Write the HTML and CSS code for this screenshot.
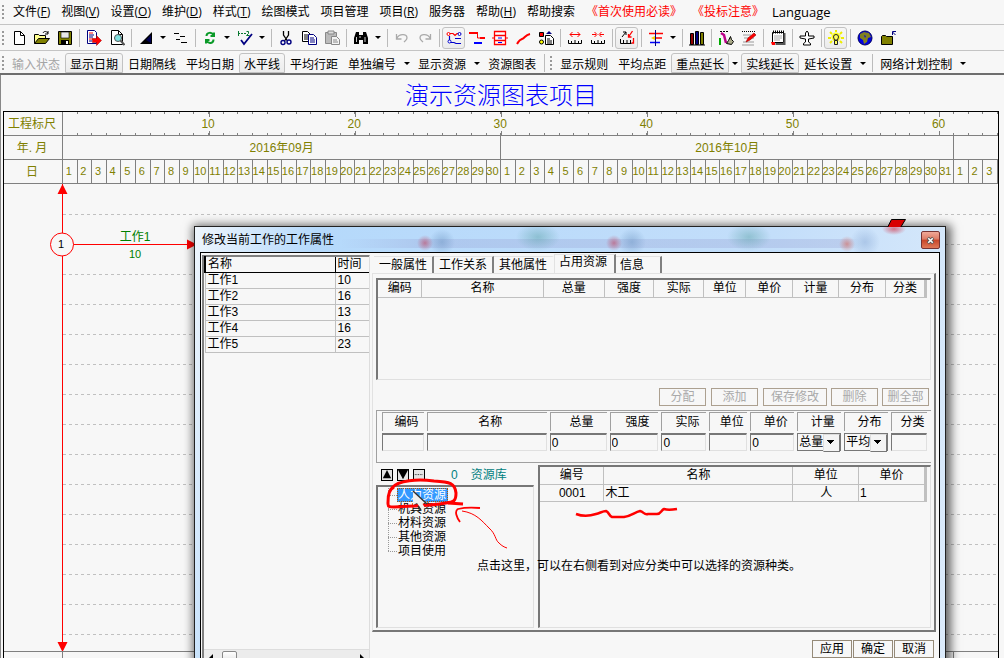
FILE: index.html
```html
<!DOCTYPE html>
<html lang="zh-CN">
<head>
<meta charset="utf-8">
<title>演示资源图表项目</title>
<link rel="stylesheet" href="styles.css">
</head>
<body>
<nav class="menubar">
  <i class="grip"></i>
  <button>文件(<u>F</u>)</button><button>视图(<u>V</u>)</button><button>设置(<u>O</u>)</button><button>维护(<u>D</u>)</button><button>样式(<u>T</u>)</button><button>绘图模式</button><button>项目管理</button><button>项目(<u>R</u>)</button><button>服务器</button><button>帮助(<u>H</u>)</button><button>帮助搜索</button><button class="notice">《首次使用必读》</button><button class="notice">《投标注意》</button><button class="lang">Language</button>
</nav>

<div class="toolbar icons">
  <i class="grip"></i>
  <button class="tool" aria-label="新建"><svg viewBox="0 0 16 16"><path d="M3.5 1.500h6l4 4v9h-10z" fill="#fff" stroke="#000"/><path d="M9.500 1.500v4h4" fill="none" stroke="#000"/></svg></button>
  <button class="tool" aria-label="打开"><svg viewBox="0 0 16 16"><path d="M.5 13.500v-9h4l1 1h6v3" fill="#ffff90" stroke="#000"/><path d="M.5 13.500l4-5h11l-4 5z" fill="#808000" stroke="#000"/><path d="M9 3c1-2 3-2 5 0m0-2v3h-3" fill="none" stroke="#000"/></svg></button>
  <button class="tool" aria-label="保存"><svg viewBox="0 0 16 16"><path d="M1.500 1.500h13v13h-13z" fill="#808000" stroke="#000"/><path d="M4 2h8v6H4z" fill="#e8e8e8" stroke="#000" stroke-width=".6"/><path d="M4 10h8v5H4z"/><path d="M9 11h2v3H9z" fill="#fff"/></svg></button>
  <i class="sep"></i>
  <button class="tool" aria-label="导出"><svg viewBox="0 0 16 16"><path d="M1.500.5h7l2 2v11h-9z" fill="#fff" stroke="#000080"/><path d="M3 3h4M3 9h4" stroke="red"/><path d="M3 5h5M3 7h4M3 11h3" stroke="#000080"/><path d="M6.500 8.500h4v-3l5 5-5 5v-3h-4z" fill="red" stroke="#900" stroke-width=".5"/></svg></button>
  <button class="tool" aria-label="打印预览"><svg viewBox="0 0 16 16"><path d="M2.500 14.500V.5h7l4 4v10z" fill="#fff" stroke="#000"/><path d="M9.500.5v4h4" fill="none" stroke="#000"/><circle cx="9" cy="8" r="3.500" fill="#80e0e0" stroke="#555"/><path d="M11.500 10.500l4 4.500" stroke="#555" stroke-width="2"/></svg></button>
  <i class="sep"></i>
  <button class="tool" aria-label="比例"><svg viewBox="0 0 16 16"><path d="M2 14L14 2v12z"/><path d="M8 10l5-5v8z" fill="#000050"/></svg></button><button class="drop" aria-label="比例选项"></button>
  <button class="tool" aria-label="分级"><svg viewBox="0 0 16 16"><path d="M1 3.500h5M7 6.500h5M3 9.500h4M8 12.500h6" fill="none" stroke="#000"/></svg></button>
  <i class="sep"></i>
  <button class="tool" aria-label="刷新"><svg viewBox="0 0 16 16"><path d="M4.500 6c0-3.500 5-4.500 7-1m.5-2.500V6H8.500M11.500 9.500c0 4-5 5-7 1m-.5 3V10h3.500" fill="none" stroke="#0a9a28" stroke-width="2"/></svg></button><button class="drop" aria-label="刷新选项"></button>
  <button class="tool" aria-label="检查"><svg viewBox="0 0 16 16"><path d="M1.500 1v5M1 3.500h8" stroke="#087830" stroke-dasharray="2 1"/><path d="M9.500 1.500h2v2l-2 2h3" fill="none" stroke="#087830"/><path d="M4 10l3 4 8-10" fill="none" stroke="#000080" stroke-width="1.800"/></svg></button><button class="drop" aria-label="检查选项"></button>
  <i class="sep"></i>
  <button class="tool" aria-label="剪切"><svg viewBox="0 0 16 16"><path d="M5.500 1v4l4 6M10.500 1v4l-4 6" fill="none" stroke="#000" stroke-width="1.300"/><circle cx="5" cy="12.500" r="2" fill="none" stroke="#000080" stroke-width="1.400"/><circle cx="11" cy="12" r="2" fill="none" stroke="#000080" stroke-width="1.400"/></svg></button>
  <button class="tool" aria-label="复制"><svg viewBox="0 0 16 16"><path d="M1.500 1.500h5l3 3v7h-8z" fill="#fff" stroke="#000"/><path d="M3 5h4M3 7h4M3 9h4" stroke="#000"/><path d="M7.500 4.500h5l3 3v7h-8z" fill="#fff" stroke="#000080"/><path d="M9 8h4M9 10h5M9 12h5" stroke="#000080"/></svg></button>
  <button class="tool" aria-label="粘贴" disabled><svg viewBox="0 0 16 16"><path d="M1.500 2.500h11v11h-11z" fill="#bbb" stroke="#888"/><path d="M4 1h6v3H4z" fill="#ddd" stroke="#888"/><path d="M7.500 6.500h5l3 3v5h-8z" fill="#f3f3f3" stroke="#888"/><path d="M9 10h4M9 12h5" stroke="#888"/></svg></button>
  <i class="sep"></i>
  <button class="tool" aria-label="查找"><svg viewBox="0 0 16 16"><path d="M3 2h3v3h4V2h3l2 6v6h-5v-4H6v4H1V8z"/><path d="M3.500 7v5M12 7v5M7 6v2" stroke="#fff" stroke-width=".8"/></svg></button><button class="drop" aria-label="查找选项"></button>
  <i class="sep"></i>
  <button class="tool" aria-label="撤销" disabled><svg viewBox="0 0 16 16"><path d="M2.500 4v5h5M3 8c2-4 10-5 10 0 0 2-2 3-3 4" fill="none" stroke="#aaa" stroke-width="1.300"/></svg></button>
  <button class="tool" aria-label="重做" disabled><svg viewBox="0 0 16 16"><path d="M13.500 4v5h-5M13 8c-2-4-10-5-10 0 0 2 2 3 3 4" fill="none" stroke="#aaa" stroke-width="1.300"/></svg></button>
  <i class="sep"></i>
  <button class="tool on" aria-label="网络图"><svg viewBox="0 0 16 16"><path d="M3 3.500h4l2 2 2-2h4" fill="none" stroke="red" stroke-width="1.200"/><circle cx="2.500" cy="4" r="1.500" fill="#fff" stroke="red"/><path d="M3.500 6v6M4 12.500h4l2 1h5M9 8.500h6" fill="none" stroke="#00c" stroke-width="1.200"/><circle cx="3.500" cy="11.500" r="1.500" fill="#fff" stroke="#00c"/><circle cx="13.500" cy="4" r="1.500" fill="#fff" stroke="#00c"/></svg></button>
  <button class="tool" aria-label="横道图"><svg viewBox="0 0 16 16"><path d="M0 3h9M11 8h5" stroke="red" stroke-width="2"/><path d="M8.500 3v5H12" fill="none" stroke="red"/><path d="M5 13h8" stroke="#00f" stroke-width="2"/></svg></button>
  <button class="tool" aria-label="单代号"><svg viewBox="0 0 16 16"><path d="M2.500 1.500h11v13h-11zM2 5.500h12M2 10.500h12" fill="#fff" stroke="red" stroke-width="1.300"/><path d="M0 8h3M13 8h3" stroke="red"/><path d="M6 8h4M6 12.500h4" stroke="#00f"/></svg></button>
  <button class="tool" aria-label="曲线"><svg viewBox="0 0 16 16"><path d="M2 14c2-3 2-4 5-5s3-4 8-5" fill="none" stroke="red" stroke-width="2"/></svg></button>
  <button class="tool" aria-label="资源图"><svg viewBox="0 0 16 16"><path d="M1.500 2.500h4v4h-4z" fill="red" stroke="#000"/><circle cx="3.500" cy="12" r="2" fill="yellow" stroke="#000"/><path d="M8 4l3-3 3 3z" fill="#000080"/><path d="M7.500 5.500h5l3 3v6h-8z" fill="#fff" stroke="#000"/><path d="M9 9h3M9 11h5M9 13h5" stroke="#000"/></svg></button>
  <i class="sep"></i>
  <button class="tool" aria-label="拉宽"><svg viewBox="0 0 16 16"><path d="M3 4.500h10M5.500 2L3 4.500 5.500 7M10.500 2L13 4.500 10.500 7" fill="none" stroke="red"/><path d="M1.500 10v3.500h13V10M4.500 11v2M8 10v3M11.500 11v2" fill="none" stroke="#000"/></svg></button>
  <button class="tool" aria-label="压缩"><svg viewBox="0 0 16 16"><path d="M2 4.500h4M10 4.500h4M4.500 2L7 4.500 4.500 7M11.500 2L9 4.500 11.500 7" fill="none" stroke="red"/><path d="M1.500 10v3.500h13V10M4.500 11v2M8 10v3M11.500 11v2" fill="none" stroke="#000"/></svg></button>
  <i class="sep"></i>
  <button class="tool on" aria-label="调整"><svg viewBox="0 0 16 16"><path d="M3 7l4-5M4 2h3v3" fill="none" stroke="#000"/><path d="M13.500 1l-4 6M9.500 4v3h3M14.500 8v5h-2" fill="none" stroke="red" stroke-width="1.300"/><path d="M1.500 9v4.500h11M4.500 10v3M8 10v3M11.500 10v3" fill="none" stroke="#000"/></svg></button>
  <i class="sep"></i>
  <button class="tool" aria-label="对齐"><svg viewBox="0 0 16 16"><path d="M1 3.500h14M5 8h9" stroke="red" stroke-width="1.500"/><path d="M2 12.500h10" stroke="#00f" stroke-width="1.500"/><path d="M7.500 0v16" stroke="#000080"/><path d="M3 8l4-2v4z" fill="#fc0"/></svg></button><button class="drop" aria-label="对齐选项"></button>
  <i class="sep"></i>
  <button class="tool" aria-label="资料库"><svg viewBox="0 0 16 16"><path d="M1.500 3.500h3v11h-3z" fill="#900000" stroke="#000"/><path d="M6.500 1.500h3v13h-3z" fill="#000080" stroke="#000"/><path d="M11.500 2.500h3v12h-3z" fill="#808000" stroke="#000"/><path d="M0 15h16" stroke="#000"/></svg></button>
  <i class="sep"></i>
  <button class="tool" aria-label="统计"><svg viewBox="0 0 16 16"><path d="M2 1.500h8" stroke="#000" stroke-dasharray="2 1"/><path d="M2 8v7" stroke="#0a0" stroke-width="2"/><path d="M3 3l3 2 2 8" fill="none" stroke="#b08" stroke-width="2.500"/><path d="M8.500 13.500l2-3 2-4 1 3 2 2-2 3z" fill="#aa8" stroke="#000"/></svg></button>
  <button class="tool" aria-label="编辑"><svg viewBox="0 0 16 16"><path d="M1 1.500h14" stroke="#000" stroke-dasharray="1 1"/><path d="M2 5h8M3 8h10M2 12h11M1 15h12" stroke="#999"/><path d="M5 12l2-4 6-5 2 2-6 5z" fill="red" stroke="#900" stroke-width=".6"/></svg></button>
  <i class="sep"></i>
  <button class="tool" aria-label="日志"><svg viewBox="0 0 16 16"><path d="M2.500 2.500h11v10h-11z" fill="#fff" stroke="#000"/><path d="M14.500 3v11h-9" fill="none" stroke="#555" stroke-width="2"/><path d="M3 2h11" stroke="#000" stroke-width="3" stroke-dasharray="1 1"/><path d="M4 6h8M4 8h8M4 10h6" stroke="#aaa"/><path d="M1 12h4v3H2z" fill="red"/></svg></button>
  <i class="sep"></i>
  <button class="tool" aria-label="发送"><svg viewBox="0 0 16 16"><path d="M8 1l1.500 2v3H15v2l-5.500 1v3l2 1.500V15h-7v-1.500l2-1.500V9L1 8V6h5.500V3z" fill="#fff" stroke="#000"/></svg></button>
  <i class="sep"></i>
  <button class="tool on" aria-label="提示"><svg viewBox="0 0 16 16"><path d="M8 0v2M2 2l2 2M14 2l-2 2M0 8h3M13 8h3M2 13l2-2M14 13l-2-2" stroke="#ee0" stroke-width="2"/><circle cx="8" cy="7" r="4.500" fill="#ffff20"/><path d="M5.500 7a2.500 2.500 0 1 1 5 0l-1 3h-3zM6.500 10.500h3v4h-3z" fill="#ffff60" stroke="#222"/></svg></button>
  <i class="sep"></i>
  <button class="tool" aria-label="网站"><svg viewBox="0 0 16 16"><circle cx="8" cy="8" r="7" fill="#0000e0" stroke="#000060"/><path d="M3 4l4-2 5 1 2 4-3 1-1 4-3 2-1-4-3-2z" fill="#808020"/><path d="M7 5l2 1-1 2z" fill="#0000e0"/></svg></button>
  <button class="tool" aria-label="上级目录"><svg viewBox="0 0 16 16"><path d="M1.500 14.500v-8l1-1h3l1 1h6v8z" fill="#808000" stroke="#000"/><path d="M15.500 5l-3-3m0 3V1.500h3.500" fill="none" stroke="#000080"/></svg></button>
</div>

<div class="toolbar words">
  <i class="grip"></i>
  <button disabled>输入状态</button><button class="on">显示日期</button><button>日期隔线</button><button>平均日期</button><button class="on">水平线</button><button>平均行距</button><button>单独编号</button><button class="drop" aria-label="编号选项"></button><button>显示资源</button><button class="drop" aria-label="资源选项"></button><button>资源图表</button><i class="sep"></i><i class="grip second"></i><button>显示规则</button><button>平均点距</button><button class="on">重点延长</button><button class="drop" aria-label="重点选项"></button><button class="on">实线延长</button><button>延长设置</button><button class="drop" aria-label="延长选项"></button><i class="sep"></i><button>网络计划控制</button><button class="drop" aria-label="控制选项"></button>
</div>

<main class="desk">
  <h1>演示资源图表项目</h1>
  <section class="chart">
    <div class="scale"><span class="rowname">工程标尺</span>
      <div class="ruler"><span class="t10">10</span><span class="t20">20</span><span class="t30">30</span><span class="t40">40</span><span class="t50">50</span><span class="t60">60</span></div></div>
    <div class="scale"><span class="rowname">年. 月</span>
      <div class="months"><span>2016年09月</span><span>2016年10月</span><span></span></div></div>
    <div class="scale"><span class="rowname">日</span>
      <div class="days"><span>1</span><span>2</span><span>3</span><span>4</span><span>5</span><span>6</span><span>7</span><span>8</span><span>9</span><span>10</span><span>11</span><span>12</span><span>13</span><span>14</span><span>15</span><span>16</span><span>17</span><span>18</span><span>19</span><span>20</span><span>21</span><span>22</span><span>23</span><span>24</span><span>25</span><span>26</span><span>27</span><span>28</span><span>29</span><span>30</span><span>1</span><span>2</span><span>3</span><span>4</span><span>5</span><span>6</span><span>7</span><span>8</span><span>9</span><span>10</span><span>11</span><span>12</span><span>13</span><span>14</span><span>15</span><span>16</span><span>17</span><span>18</span><span>19</span><span>20</span><span>21</span><span>22</span><span>23</span><span>24</span><span>25</span><span>26</span><span>27</span><span>28</span><span>29</span><span>30</span><span>31</span><span>1</span><span>2</span><span>3</span></div></div>
    <div class="plot">
      <div class="lanes"><i></i><i></i><i></i><i></i><i></i><i></i><i></i><i></i><i></i><i></i><i></i><i></i><i></i><i></i><i></i></div>
      <svg class="network" width="200" height="468">
        <path d="M58.500 0v468M58 60.500h134" stroke="red" fill="none"/>
        <path d="M58.500 0l5 10h-10zM58.500 468l5-10h-10zM193 60.500l-10-5v10z" fill="red"/>
        <circle cx="58" cy="60.500" r="11.500" fill="#f7f7f7" stroke="red"/>
        <text x="57" y="64" text-anchor="middle" class="num">1</text>
        <text x="131" y="57" text-anchor="middle" class="task">工作1</text>
        <text x="131" y="74" text-anchor="middle" class="task num">10</text>
      </svg>
      <svg class="flag" width="20" height="8"><path d="M4.500.5h14l-5 8H.5z" fill="#d80000" stroke="#000"/></svg>
    </div>
    <div class="scale last"><span class="rowname">周</span><div class="months"><span></span><span></span><span></span></div></div>
  </section>
</main>

<section class="dialog" role="dialog" aria-labelledby="dlg-title">
  <header><h2 id="dlg-title">修改当前工作的工作属性</h2><button class="close" aria-label="关闭"><svg viewBox="0 0 12 10"><path d="M3 2l6 6M9 2L3 8" stroke="#555" stroke-width="3.500"/><path d="M3.500 2.500l5 5M8.500 2.500l-5 5" stroke="#fff" stroke-width="1.800"/></svg></button></header>
  <div class="client">
    <div class="joblist">
      <table class="jobs">
        <thead><tr><th>名称</th><th class="time">时间</th></tr></thead>
        <tbody><tr><td>工作1</td><td>10</td></tr><tr><td>工作2</td><td>16</td></tr><tr><td>工作3</td><td>13</td></tr><tr><td>工作4</td><td>16</td></tr><tr><td>工作5</td><td>23</td></tr></tbody>
      </table>
      <div class="hscroll"><i class="left"></i><i class="thumb"></i><i class="right"></i></div>
    </div>
    <div class="props">
      <div class="tabs" role="tablist"><button role="tab">一般属性</button><button role="tab">工作关系</button><button role="tab">其他属性</button><button role="tab" class="current" aria-selected="true">占用资源</button><button role="tab" class="info">信息</button></div>
      <div class="panel">
        <div class="box used">
          <table class="grid"><colgroup><col class="c-code"><col class="c-name"><col class="c-total"><col class="c-power"><col class="c-real"><col class="c-unit"><col class="c-price"><col class="c-measure"><col class="c-spread"><col class="c-kind"></colgroup>
            <thead><tr><th>编码</th><th>名称</th><th>总量</th><th>强度</th><th>实际</th><th>单位</th><th>单价</th><th>计量</th><th>分布</th><th>分类</th></tr></thead></table>
        </div>
        <div class="actions"><button disabled>分配</button><button disabled>添加</button><button class="wide" disabled>保存修改</button><button disabled>删除</button><button disabled>删全部</button></div>
        <div class="entry">
          <label for="f1">编码</label><label for="f2">名称</label><label for="f3">总量</label><label for="f4">强度</label><label for="f5">实际</label><label for="f6">单位</label><label for="f7">单价</label><label for="f8">计量</label><label for="f9">分布</label><label for="f10">分类</label>
          <input id="f1"><input id="f2"><input id="f3" value="0"><input id="f4" value="0"><input id="f5" value="0"><input id="f6"><input id="f7" value="0"><span class="pick"><select id="f8"><option>总量</option></select></span><span class="pick"><select id="f9"><option>平均</option></select></span><input id="f10">
        </div>
        <div class="lower">
          <div class="library">
            <div class="libhead">
              <button aria-label="上移"><svg viewBox="0 0 12 12"><path d="M6 0l5 10H1z"/></svg></button><button aria-label="下移"><svg viewBox="0 0 12 12"><path d="M0 0h12L6 11z"/></svg></button><button aria-label="展开"><svg viewBox="0 0 12 12"><path d="M1 5.500h10" stroke="#000" stroke-dasharray="1 1"/></svg></button>
              <span class="count">0</span><span>资源库</span>
            </div>
            <ul class="tree"><li class="sel"><span>人力资源</span></li><li><span>机具资源</span></li><li><span>材料资源</span></li><li><span>其他资源</span></li><li><span>项目使用</span></li></ul>
          </div>
          <div class="box pool">
            <table class="grid"><colgroup><col class="p-code"><col class="p-name"><col class="p-unit"><col class="p-price"></colgroup>
              <thead><tr><th>编号</th><th>名称</th><th>单位</th><th>单价</th></tr></thead>
              <tbody><tr><td class="mid">0001</td><td>木工</td><td class="mid">人</td><td>1</td></tr></tbody></table>
          </div>
        </div>
      </div>
      <div class="confirm"><button>应用</button><button>确定</button><button>取消</button></div>
    </div>
  </div>
  <svg class="marks" width="330" height="80" fill="none" stroke="#f00">
    <path d="M10 10C3 13 4 23 4 27c0 3 2 3 6 3 14-1 36-1 52-4 8-1 10-2 10-10C71 6 66 5 50 4 34 2 14 3 8 11" stroke-width="3"/>
    <path d="M64 26l15 1" stroke-width="3"/>
    <path d="M96 31c-10-1-18 0-22 1-4 2-1 9 2 13" stroke-width="1.800"/>
    <path d="M78 34c14 2 20 10 27 17 7 6 6 12 10 15 3 3 5 4 8 5" stroke-width="1"/>
    <path d="M192 37c8 3 14 2 20 0 4-1 7-3 10-3 3 1 3 5 6 6h12c7-1 11-5 16-6 4 1 4 4 8 3h9c4 0 4-4 7-5 3 1 6 1 13 0" stroke-width="2.500"/>
    <path d="M29 14v14l4-2 4 6 4-1-3-5h5z" stroke="none" fill="#f0f0f0"/>
    <path d="M29 14l14 13M34 29l3 4" stroke="#333" stroke-width="1.500"/>
  </svg>
  <p class="hint">点击这里，可以在右侧看到对应分类中可以选择的资源种类。</p>
</section>
</body>
</html>
```

FILE: styles.css
```css
* { box-sizing: border-box; }
body, h1, h2, p, ul { margin: 0; padding: 0; }
html, body { height: 100%; }
body {
  position: relative;
  display: flex;
  flex-direction: column;
  overflow: hidden;
  background: #f7f7f7;
  color: #000;
  font: 12px/16px "Liberation Sans", "Noto Sans CJK SC", sans-serif;
}
button, input, select { font: inherit; color: inherit; margin: 0; padding: 0; border: 0; background: none; border-radius: 0; }
button { white-space: nowrap; }

/* menus and toolbars */
.grip { flex: none; width: 3px; height: 14px; margin-left: 2px; margin-right: 2px; background: repeating-linear-gradient(#999 0 2px, transparent 2px 4px); background-size: 2px 100%; background-repeat: no-repeat; }
.menubar { display: flex; align-items: center; height: 25px; flex: none; border-bottom: 1px solid #c4c4c4; font-family: "Open Sans", "Noto Sans CJK SC", sans-serif; }
.menubar button { padding: 0 6px 0 5px; }
.menubar button:first-of-type { margin-left: 1px; }
.menubar .notice { color: #f00; padding: 0 5px; }
.menubar .lang { padding-left: 3px; font-size: 13px; }
.toolbar { display: flex; align-items: center; flex: none; height: 26px; border-bottom: 1px solid #c4c4c4; }
.tool { display: flex; align-items: center; justify-content: center; width: 23px; height: 22px; flex: none; border: 1px solid transparent; }
.tool svg { width: 16px; height: 16px; flex: none; }
.on { border: 1px solid #c2c2c2; border-radius: 3px; background: linear-gradient(#f7f7f7, #ececec); }
.drop { width: 12px; height: 20px; flex: none; display: flex; align-items: center; justify-content: center; }
.drop::after { content: ""; border: 3px solid transparent; border-top-color: #000; border-bottom: 0; }
.sep { flex: none; width: 1px; height: 18px; margin: 0 2px 0 3px; background: #bbb; }
.words { height: 24px; padding-top: 2px; border-bottom: 2px solid #6e6e6e; }
.words button:not(.drop) { height: 20px; padding: 3px 4px 0 4px; border-width: 1px; border-style: solid; border-color: transparent; }
.words button.on:not(.drop) { border-color: #c2c2c2; border-radius: 3px 3px 0 0; }
.words button:disabled { color: #a5a5a5; }
.words .second { margin: 0 2px 0 3px; }

/* chart */
.desk { flex: 1; min-height: 0; display: flex; flex-direction: column; padding: 0 5px 0 2px; border-left: 1px solid #888; }
.desk h1 { height: 36px; font-size: 24px; line-height: 42px; font-weight: 300; text-align: center; color: #00f; }
.chart { flex: 1; min-height: 0; display: flex; flex-direction: column; border: 1px solid #000; border-bottom: 0; }
.scale { display: flex; height: 24px; flex: none; border-bottom: 1px solid #808080; color: #808000; line-height: 24px; text-align: center; }
.rowname { width: 59px; flex: none; padding-right: 2px; border-right: 1px solid #808080; }
.ruler, .months, .days { flex: 1; min-width: 0; display: grid; }
.ruler {
  grid-template-columns: repeat(64, minmax(0, 1fr));
  background:
    repeating-linear-gradient(to right, transparent 0 calc(100% / 64 - 1px), #808080 calc(100% / 64 - 1px) calc(100% / 64)) top / 100% 2px no-repeat,
    repeating-linear-gradient(to right, transparent 0 calc(100% / 64 - 1px), #808080 calc(100% / 64 - 1px) calc(100% / 64)) bottom / 100% 2px no-repeat;
}
.ruler span { grid-row: 1; padding-right: 2px; background: linear-gradient(#808080, #808080) top / 1px 5px no-repeat, linear-gradient(#808080, #808080) bottom / 1px 5px no-repeat; }
.t10 { grid-column: 10 / span 2; }
.t20 { grid-column: 20 / span 2; }
.t30 { grid-column: 30 / span 2; }
.t40 { grid-column: 40 / span 2; }
.t50 { grid-column: 50 / span 2; }
.t60 { grid-column: 60 / span 2; }
.months { grid-template-columns: 30fr 31fr 3fr; }
.months span { border-right: 1px solid #808080; }
.months span:last-child { border: 0; }
.days { grid-template-columns: repeat(64, minmax(0, 1fr)); font-size: 11px; line-height: 23px; }
.days span { display: flex; justify-content: center; padding-right: 2px; border-right: 1px solid #808080; min-width: 0; }
.plot { position: relative; flex: 1; min-height: 0; overflow: hidden; padding: 1px 1px 0 59px; }
.lanes { display: flex; flex-direction: column; }
.lanes i { height: 30px; flex: none; background: repeating-linear-gradient(to right, #c0c0c0 0 3px, transparent 3px 6px) bottom / 100% 1px no-repeat; }
.network { position: absolute; left: 0; top: 0; }
.network text { font-size: 12px; }
.network .num { font-size: 11px; }
.network .task { fill: #008000; }
.flag { position: absolute; right: 91px; top: 35px; z-index: 1; }
.scale.last { height: 7px; overflow: hidden; border-top: 1px solid #808080; border-bottom: 0; }

/* dialog */
.dialog {
  position: absolute;
  left: 194px;
  right: 58px;
  top: 226px;
  padding: 0 5px;
  border: 1px solid #222;
  background: linear-gradient(100deg, #eef5fc 0, #b5d9fb 120px, #c3defa 70%, #dcebfb 100%);
  box-shadow: 2px 2px 9px 3px rgba(0, 0, 0, .6);
}
.dialog header {
  display: flex;
  align-items: center;
  justify-content: space-between;
  height: 25px;
  padding-top: 1px;
  background:
    radial-gradient(circle 8px at 225px 16px, rgba(190, 80, 110, .65), transparent),
    radial-gradient(circle 13px at 242px 15px, rgba(110, 150, 195, .5), transparent),
    radial-gradient(ellipse 22px 14px at 338px 10px, rgba(70, 150, 150, .4), transparent),
    radial-gradient(circle 8px at 414px 16px, rgba(190, 80, 110, .65), transparent),
    radial-gradient(circle 14px at 432px 15px, rgba(110, 150, 195, .5), transparent),
    radial-gradient(ellipse 22px 14px at 549px 10px, rgba(70, 150, 150, .4), transparent),
    radial-gradient(circle 8px at 647px 17px, rgba(210, 100, 90, .6), transparent),
    radial-gradient(circle 15px at 665px 15px, rgba(150, 180, 220, .6), transparent),
    radial-gradient(ellipse 12px 6px at 694px 2px, rgba(210, 40, 60, .6), transparent),
    linear-gradient(to right, transparent 140px, rgba(150, 160, 210, .3) 220px 640px, transparent 660px) 0 12px / 100% 9px no-repeat;
}
.dialog h2 { font-size: 12px; font-weight: 400; padding-left: 2px; }
.close { width: 19px; height: 18px; display: flex; align-items: center; justify-content: center; border: 1px solid #733; border-radius: 2px; background: linear-gradient(#f0a898, #dd7a65 45%, #c84428 50%, #e07858); }
.close svg { width: 11px; height: 9px; }
.client { display: flex; gap: 2px; min-height: 420px; padding: 2px 3px 0 1px; border: 1px solid #000; background: #f7f7f7; }
.joblist { width: 168px; flex: none; display: flex; flex-direction: column; border: 2px solid #808080; border-right: 1px solid #ddd; border-bottom: 0; border-top-width: 1px; }
table { border-collapse: collapse; table-layout: fixed; }
th { font-weight: 400; padding: 0; }
td { padding: 0; }
.jobs { width: 100%; }
.jobs th, .jobs td { height: 16px; line-height: 15px; text-align: left; border: 1px solid #c0c0c0; border-top: 0; border-right: 0; }
.jobs th { padding-left: 2px; border: 1px solid #000; border-top-color: #808080; border-left-width: 2px; border-right: 0; }
.jobs .time { width: 34px; border-left-width: 1px; }
.jobs td { padding-left: 2px; }
.hscroll { display: flex; align-items: center; height: 16px; margin-top: auto; margin-bottom: 6px; padding: 0 5px; border-top: 1px solid #ddd; background: #ececec; }
.hscroll .left, .hscroll .right { border: 4px solid transparent; border-left: 0; border-right-color: #000; }
.hscroll .right { margin-left: auto; border-left: 4px solid #000; border-right: 0; }
.hscroll .thumb { width: 15px; height: 14px; margin-left: 9px; border: 1px solid #888; border-radius: 2px; background: linear-gradient(#fff, #ddd); }
.props { flex: 1; min-width: 0; }
.tabs { display: flex; align-items: flex-end; height: 18px; padding-left: 2px; }
.tabs button { width: 60px; height: 17px; padding: 1px 0 0 5px; text-align: left; border-top: 1px solid #e2e2e2; border-right: 2px solid #808080; line-height: 15px; }
.tabs button:nth-child(3) { border-right-color: transparent; }
.tabs .current { width: 62px; height: 19px; padding: 0 0 3px 4px; background: #f7f7f7; border-left: 1px solid #e2e2e2; }
.tabs .info { width: 46px; padding-left: 4px; }
.panel { padding: 4px 3px 2px 3px; border: 1px solid #e2e2e2; border-right: 2px solid #777; border-bottom: 2px solid #777; }
.box { border: 1px solid #e0e0e0; border-top: 2px solid #777; border-left: 2px solid #777; }
.used { height: 102px; }
.grid { width: calc(100% - 3px); }
.grid th, .grid td { height: 17px; line-height: 16px; border: 1px solid #c0c0c0; border-top: 0; border-left: 0; }
.grid th:last-child, .grid td:last-child { border-right: 3px solid #c0c0c0; }
.grid td { padding-left: 1px; }
.grid .mid { text-align: center; }
.c-code { width: 8%; }
.c-name { width: 22.2%; }
.c-total { width: 11.1%; }
.c-power, .c-real { width: 9.1%; }
.c-unit { width: 7.7%; }
.c-price { width: 8.5%; }
.c-measure { width: 8.4%; }
.c-spread { width: 8.6%; }
.c-kind { width: 7.3%; }
.p-code { width: 16.6%; }
.p-name { width: 49%; }
.p-unit { width: 17%; }
.p-price { width: 17.4%; }
.actions { display: flex; justify-content: flex-end; gap: 4px; margin: 8px 2px 0 0; }
.actions button { width: 47px; height: 18px; border: 1px solid #aca090; color: #a9a9a9; line-height: 16px; }
.actions button:nth-child(2) { margin: 0 1px; }
.actions .wide { width: 64px; }
.entry { display: grid; grid-template-columns: 42fr 120fr 57fr 49fr 45fr 38fr 44fr 44fr 44fr 36fr; column-gap: 3px; row-gap: 2px; align-items: start; margin-top: 4px; padding: 1px 4px 12px 5px; height: 53px; border-top: 1px solid #a0a0a0; border-bottom: 1px solid #a0a0a0; border-left: 1px solid #a0a0a0; }
.entry label { height: 19px; line-height: 18px; padding-left: 6px; text-align: center; border-top: 1px solid #a0a0a0; border-left: 1px solid #a0a0a0; }
.entry input { width: 100%; min-width: 0; height: 18px; padding: 0 1px; border: 1px solid #e0e0e0; border-top: 2px solid #777; border-left: 1px solid #777; }
.pick { display: flex; position: relative; border: 1px solid #777; height: 18px; }
.pick select { appearance: none; width: 100%; padding-left: 1px; line-height: 16px; }
.pick::after { content: ""; width: 15px; height: 16px; position: absolute; right: 0; top: 0; pointer-events: none; border: 1px solid #777; border-top-color: #ddd; border-left-color: #ddd; background: linear-gradient(#000, #000) 3px 5px / 7px 1px no-repeat, linear-gradient(#000, #000) 4px 6px / 5px 1px no-repeat, linear-gradient(#000, #000) 5px 7px / 3px 1px no-repeat, linear-gradient(#000, #000) 6px 8px / 1px 1px no-repeat, #f4f4f4; }
.lower { display: grid; grid-template-columns: 158px minmax(0, 1fr); column-gap: 4px; margin-top: 2px; height: 163px; }
.library { display: flex; flex-direction: column; }
.libhead { display: flex; align-items: center; gap: 4px; height: 20px; padding-left: 5px; color: #008080; }
.libhead button { width: 12px; height: 12px; border: 1px solid #000; display: flex; background: #e4e4e4; }
.libhead svg { width: 100%; height: 100%; }
.libhead .count { padding: 0 9px 0 22px; }
.tree { flex: 1; list-style: none; padding-top: 1px; border: 1px solid #e0e0e0; border-top: 2px solid #777; border-left: 2px solid #777; }
.tree li { display: flex; height: 14px; line-height: 14px; padding-left: 19px; background: repeating-linear-gradient(#999 0 1px, transparent 1px 2px) 10px 0 / 1px 100% no-repeat, repeating-linear-gradient(to right, #999 0 1px, transparent 1px 2px) 10px 7px / 9px 1px no-repeat; }
.tree li:last-child { background-size: 1px 8px, 9px 1px; }
.tree .sel span { padding-right: 2px; background: #3399ff; color: #fff; outline: 1px dotted #a50; outline-offset: -1px; }
.tree span { padding-left: 1px; }
.confirm { display: flex; justify-content: flex-end; gap: 1px; margin-top: 8px; padding-right: 2px; }
.confirm button { width: 40px; height: 18px; border: 1px solid #958a78; line-height: 16px; }
.marks { position: absolute; left: 189px; top: 250px; }
.hint { position: absolute; left: 282px; top: 331px; white-space: nowrap; }
```
